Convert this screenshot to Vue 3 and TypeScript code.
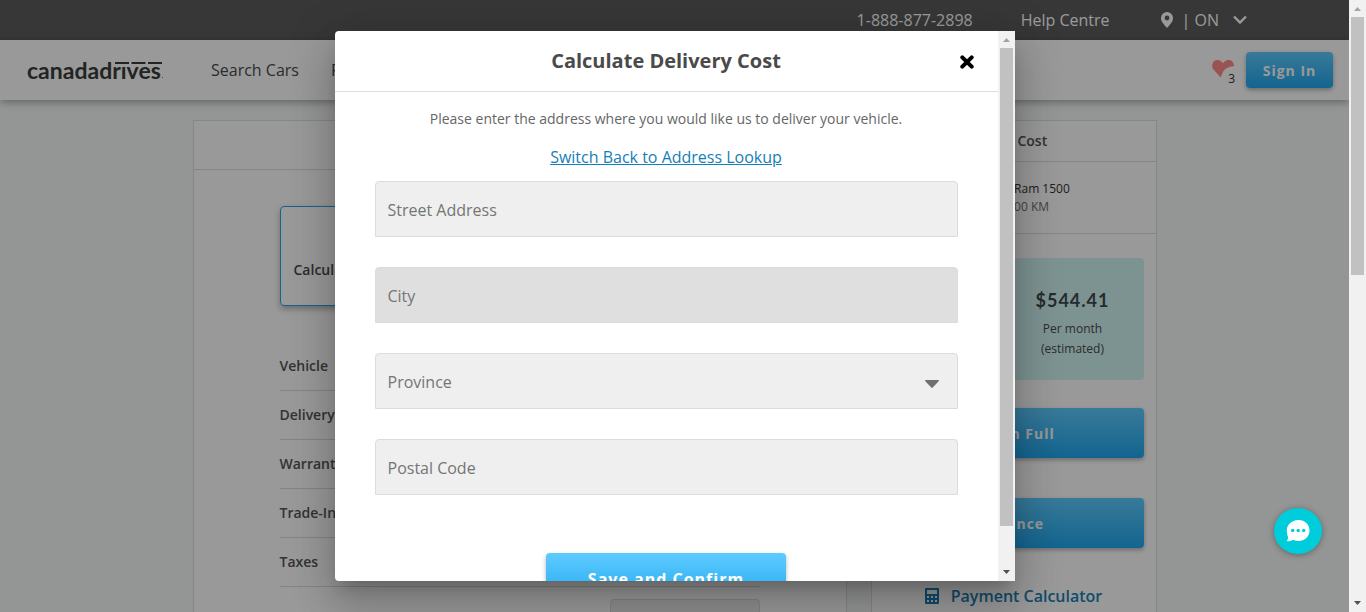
<script setup lang="ts">
import { ref } from 'vue'

interface Field {
  id: string
  label: string
  kind: 'text' | 'select'
  active?: boolean
}

const fields: Field[] = [
  { id: 'street', label: 'Street Address', kind: 'text' },
  { id: 'city', label: 'City', kind: 'text', active: true },
  { id: 'province', label: 'Province', kind: 'select' },
  { id: 'postal', label: 'Postal Code', kind: 'text' },
]

const costs: string[] = ['Vehicle', 'Delivery', 'Warranty', 'Trade-In', 'Taxes']
const open = ref(true)
const pageThumb = 44.6
const dialogThumb = 92.6
</script>

<template>
  <div class="window">
    <div class="page">
      <header>
        <div class="topbar">
          <a href="#" class="phone">1-888-877-2898</a>
          <a href="#" class="help">Help Centre</a>
          <button type="button" class="region">
            <svg width="12" height="16" viewBox="0 0 12 16"><path fill="currentColor" fill-rule="evenodd" d="M6 0a6 6 0 0 0-6 6c0 3.600 2 5.400 6 10 4-4.600 6-6.400 6-10a6 6 0 0 0-6-6zm0 3.600a2.400 2.400 0 1 1 0 4.800 2.400 2.400 0 0 1 0-4.800z"/></svg>
            <span>| ON</span>
            <svg width="14" height="10" viewBox="0 0 14 10"><path fill="none" stroke="currentColor" stroke-width="2.400" d="M1 1.500 7 7.500l6-6"/></svg>
          </button>
        </div>
        <nav class="nav">
          <a href="#" class="logo" aria-label="canadadrives">canadadrıves<svg class="bars" width="47" height="2" viewBox="0 0 47 2"><path fill="currentColor" d="M0 0h14v2H0zM16.500 0h14v2h-14zM33 0h14v2H33z"/></svg><i class="dot"></i></a>
          <a href="#" class="navlink">Search Cars</a>
          <a href="#" class="navlink">Finance</a>
          <a href="#" class="likes" aria-label="Favourites">
            <svg width="22" height="18" viewBox="0 0 22 18"><path fill="#ff8a8a" d="M8.700 17.500 1.500 9.500C-.3 7.300-.4 4 1.300 1.900 3.400-.5 7.400-.5 9.600 1.800l1.400 1.500 1.400-1.500C14.600-.5 18.600-.5 20.700 1.900c1 1.300 1.400 2.800 1.200 4.400-5.600.2-10 2.800-11.700 7.200z"/></svg>
            <span>3</span>
          </a>
          <button type="button" class="btn signin">Sign In</button>
        </nav>
      </header>

      <main class="columns">
        <section class="panel">
          <div class="panel-top"></div>
          <div class="summary">
            <button type="button" class="calc">Calculate Delivery Cost</button>
            <ul class="costs">
              <li v-for="c in costs" :key="c">{{ c }}</li>
            </ul>
            <div class="total"></div>
          </div>
        </section>
        <aside class="panel side">
          <h2>Total Cost</h2>
          <div class="car">
            <div class="car-name">2019 Ram 1500</div>
            <div class="car-km">165,000 KM</div>
          </div>
          <div class="offer">
            <div class="price">
              <div></div>
              <div>
                <strong>$544.41</strong>
                <span>Per month<br>(estimated)</span>
              </div>
            </div>
            <button type="button" class="btn wide">Pay in Full</button>
            <button type="button" class="btn wide">Finance</button>
            <a href="#" class="paylink">
              <svg width="14" height="16" viewBox="0 0 14 16"><path fill="currentColor" fill-rule="evenodd" d="M1 0h12a1 1 0 0 1 1 1v14a1 1 0 0 1-1 1H1a1 1 0 0 1-1-1V1a1 1 0 0 1 1-1zm1 2v4h10V2zM2 8v2h2V8zm4 0v2h2V8zm4 0v2h2V8zM2 12v2h2v-2zm4 0v2h2v-2zm4 0v2h2v-2z"/></svg>
              Payment Calculator
            </a>
          </div>
        </aside>
      </main>

      <div v-if="open" class="overlay">
        <div class="dialog" role="dialog" aria-labelledby="dlg-title">
          <div class="dialog-content">
            <div class="dialog-head">
              <h1 id="dlg-title">Calculate Delivery Cost</h1>
              <button type="button" class="close" aria-label="Close" @click="open = false">
                <svg width="14" height="14" viewBox="0 0 14 14"><path stroke="#000" stroke-width="4" stroke-linecap="round" d="M2.300 2.300l9.400 9.400M11.700 2.300l-9.400 9.400"/></svg>
              </button>
            </div>
            <form class="form" @submit.prevent>
              <p>Please enter the address where you would like us to deliver your vehicle.</p>
              <a href="#" class="switch">Switch Back to Address Lookup</a>
              <div v-for="f in fields" :key="f.id" class="field">
                <select v-if="f.kind === 'select'" :id="f.id" :aria-label="f.label">
                  <option>{{ f.label }}</option>
                </select>
                <input v-else :id="f.id" type="text" :class="{ active: f.active }" :placeholder="f.label" :aria-label="f.label">
                <svg v-if="f.kind === 'select'" class="caret" width="14" height="8" viewBox="0 0 14 8"><path fill="#6f6f6f" d="M.8 0h12.400c.8 0 1 .7.5 1.200L7.700 7.500c-.4.400-1 .4-1.400 0L.3 1.200C-.2.700 0 0 .8 0z"/></svg>
              </div>
              <button type="submit" class="btn save">Save and Confirm</button>
            </form>
          </div>
          <div class="scrollbar" aria-hidden="true">
            <svg width="17" height="17" viewBox="0 0 17 17"><path fill="#a3a3a3" d="M5 11l3.500-4 3.500 4z"/></svg>
            <div class="track"><div class="thumb" :style="{ height: dialogThumb + '%' }"></div></div>
            <svg width="17" height="17" viewBox="0 0 17 17"><path fill="#505050" d="M5 6l3.500 4L12 6z"/></svg>
          </div>
        </div>
      </div>

      <button type="button" class="chat" aria-label="Chat">
        <svg width="24" height="22" viewBox="0 0 24 22"><path fill="#fff" d="M12.500 0C18.800 0 23.500 4.500 23.500 10.500S18.800 21 12.500 21c-2 0-3.700-.4-5.300-1.200C5.500 21 3.200 21.500.8 21c1-1 1.400-2.600 1.300-4.200C1.200 15 .8 12.800.8 10.500.8 4.500 6.200 0 12.500 0z"/><g fill="#00cddb"><circle cx="6.700" cy="10.500" r="1.700"/><circle cx="12.200" cy="10.500" r="1.700"/><circle cx="17.700" cy="10.500" r="1.700"/></g></svg>
      </button>
    </div>
    <div class="scrollbar" aria-hidden="true">
      <svg width="17" height="17" viewBox="0 0 17 17"><path fill="#a3a3a3" d="M5 11l3.500-4 3.500 4z"/></svg>
      <div class="track"><div class="thumb" :style="{ height: pageThumb + '%' }"></div></div>
      <svg width="17" height="17" viewBox="0 0 17 17"><path fill="#505050" d="M5 6l3.500 4L12 6z"/></svg>
    </div>
  </div>
</template>

<style>
body { margin: 0; }
</style>

<style scoped>
* { box-sizing: border-box; }
.window {
  display: flex;
  height: 100vh;
  overflow: hidden;
  font-family: "Open Sans", "Noto Sans", sans-serif;
  font-size: 16px;
  color: #4a4a4a;
}
.page { position: relative; flex: 1; min-width: 0; overflow: hidden; background: #f7faf8; }
svg { display: block; flex: none; }
button, input, select { font: inherit; }
button { border: 0; padding: 0; background: none; cursor: pointer; }
a { text-decoration: none; color: inherit; }

.topbar {
  display: flex;
  justify-content: flex-end;
  align-items: center;
  height: 40px;
  padding-right: 102px;
  background: #5c5c5c;
  color: #fff;
}
.help { margin-left: 48px; }
.region { display: flex; align-items: center; margin-left: 51px; color: #fff; }
.region span { margin: 0 14px 0 9px; }
.nav {
  position: relative;
  display: flex;
  align-items: center;
  height: 60px;
  padding: 0 16px 0 27px;
  background: #fff;
  box-shadow: 0 2px 8px rgba(0, 0, 0, .35);
}
.logo {
  position: relative;
  width: 136px;
  margin-right: 48px;
  font-family: Lato, sans-serif;
  font-weight: 700;
  font-size: 23px;
  line-height: 24px;
  color: #3a3d3b;
}
.bars { position: absolute; right: 1px; top: 4px; }
.dot { position: absolute; right: 0; bottom: 4px; width: 1px; height: 1px; background: #777; }
.navlink { margin-right: 32px; }
.likes { display: flex; margin-left: auto; align-items: flex-start; font-size: 12px; }
.likes svg { margin-top: 8px; }
.likes span { margin: 18px 11px 0 -6px; line-height: 18px; color: #333; }
.btn {
  border-radius: 4px;
  background: linear-gradient(#5fcbff, #20a8f0);
  color: #fff;
  font-weight: 700;
  letter-spacing: 1px;
  box-shadow: 0 2px 4px rgba(0, 0, 0, .3);
}
.signin { width: 87px; height: 36px; font-size: 14px; }

.columns {
  display: grid;
  grid-template-columns: 1fr 286px;
  gap: 24px;
  max-width: 964px;
  margin: 20px auto 0;
}
.panel { border: 1px solid #e0e0e0; background: #fff; min-height: 700px; }
.panel-top { height: 49px; border-bottom: 1px solid #e0e0e0; }
.summary { max-width: 480px; margin: 36px auto 0; }
.calc {
  display: block;
  width: 230px;
  height: 100px;
  padding: 26px 13px 0;
  text-align: left;
  white-space: nowrap;
  border: 1px solid #20a8f0;
  border-radius: 4px;
  box-shadow: 0 3px 6px rgba(0, 0, 0, .3);
  font-size: 14px;
  font-weight: 600;
  color: #4a4a4a;
}
.costs { list-style: none; margin: 36px 0 12px; padding: 0; font-size: 14px; font-weight: 600; color: #555; }
.costs li { height: 49px; line-height: 48px; border-bottom: 1px solid #dcdcdc; }
.total { width: 150px; height: 50px; margin-left: auto; border: 1px solid #dcdcdc; border-radius: 4px; background: #efefef; }
h2 {
  margin: 0;
  height: 41px;
  line-height: 40px;
  text-align: center;
  font-size: 14px;
  font-weight: 600;
  color: #555;
  border-bottom: 1px solid #e0e0e0;
}
.car { height: 72px; padding: 18px 0 0 112px; line-height: 18px; font-size: 12px; border-bottom: 1px solid #e0e0e0; }
.car-name { color: #333; }
.car-km { color: #6f6f6f; }
.offer { padding: 24px 12px; }
.price {
  display: grid;
  grid-template-columns: 1fr 1fr;
  height: 122px;
  padding: 30px 14px 0 18px;
  margin-bottom: 28px;
  border-radius: 4px;
  background: #d0f5f4;
  text-align: center;
}
.price strong { display: block; font-family: Lato, sans-serif; font-size: 18px; line-height: 24px; letter-spacing: 1px; color: #3f4a4a; }
.price span { display: block; margin-top: 7px; font-size: 12px; line-height: 20px; }
.wide { display: block; width: 100%; height: 50px; margin-bottom: 40px; font-size: 14px; }
.paylink { display: flex; align-items: center; justify-content: center; gap: 12px; margin-top: -3px; font-weight: 600; color: #1c7fb0; }

.overlay {
  position: absolute;
  inset: 0;
  display: flex;
  align-items: center;
  justify-content: center;
  background: rgba(0, 0, 0, .4);
}
.dialog {
  display: flex;
  width: 680px;
  max-width: 90%;
  height: 90%;
  border-radius: 4px 0 0 4px;
  background: #fff;
  box-shadow: 0 11px 15px -7px rgba(0, 0, 0, .2), 0 24px 38px 3px rgba(0, 0, 0, .14), 0 9px 46px 8px rgba(0, 0, 0, .12);
}
.dialog-content { flex: 1; min-width: 0; overflow: hidden; border-radius: 4px; }
.dialog-head { position: relative; height: 61px; border-bottom: 1px solid #dedede; }
h1 { margin: 0; line-height: 60px; font-size: 20px; font-weight: 700; text-align: center; }
.close { position: absolute; right: 24px; top: 24px; }
.form { padding: 16px 40px; text-align: center; }
p { margin: 0; font-size: 14px; line-height: 22px; color: #666; }
.switch { display: block; margin: 15px 0 12px; line-height: 24px; color: #1580b8; text-decoration: underline; }
.field { position: relative; margin-bottom: 30px; }
.field input, .field select {
  display: block;
  width: 100%;
  height: 56px;
  padding: 2px 12px 0;
  border: 1px solid #dcdcdc;
  border-radius: 4px 4px 0 0;
  background: #efefef;
  color: #757575;
  appearance: none;
  outline: 0;
}
.field input::placeholder { color: #757575; opacity: 1; }
.field .active { background: #dfdfdf; }
.caret { position: absolute; right: 19px; top: 27px; }
.save { display: block; width: 240px; height: 50px; margin: 58px auto 0; padding-top: 2px; font-size: 16px; }

.scrollbar { flex: none; display: flex; flex-direction: column; width: 17px; background: #f1f1f1; }
.track { flex: 1; padding: 0 2px; }
.thumb { background: #c1c1c1; }
.chat {
  position: absolute;
  right: 27px;
  bottom: 58px;
  display: flex;
  align-items: center;
  justify-content: center;
  width: 48px;
  height: 46px;
  border-radius: 50%;
  background: #00cddb;
  box-shadow: 0 1px 6px rgba(0, 0, 0, .35);
}
</style>
